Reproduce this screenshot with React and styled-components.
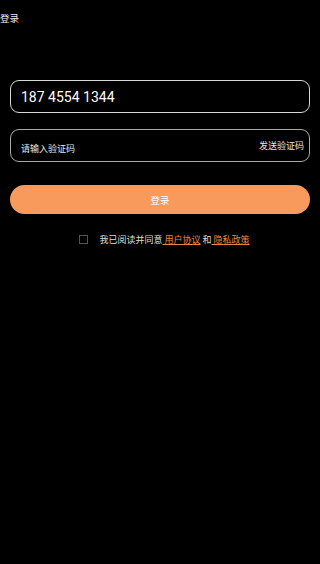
import styled, { createGlobalStyle } from "styled-components";

const GlobalStyle = createGlobalStyle`
  html, body {
    margin: 0;
    padding: 0;
    background: #000;
  }
  body {
    font-family: "Noto Sans CJK SC", Roboto, sans-serif;
  }
`;

const Page = styled.div`
  width: 320px;
  height: 564px;
  background: #000;
  color: #fff;
  box-sizing: border-box;
`;

const Header = styled.div`
  height: 36px;
  padding-top: 11px;
  box-sizing: border-box;
  font-size: 9.5px;
  line-height: 14px;
  color: #eee;
`;

const Form = styled.div`
  padding: 44px 10px 0;
  display: flex;
  flex-direction: column;
`;

const Field = styled.div`
  height: 33px;
  box-sizing: border-box;
  border: ${(p) => (p.active ? "1.5px solid #d8d8d8" : "1px solid #a8a8a8")};
  border-radius: 9px;
  display: flex;
  align-items: center;
  justify-content: space-between;
  padding: 0 5px 0 10px;
  margin-bottom: ${(p) => p.gap}px;
`;

const Value = styled.span`
  font-family: Roboto, "Noto Sans CJK SC", sans-serif;
  font-size: 14px;
  color: #fff;
  padding-top: 1px;
`;

const Placeholder = styled.span`
  font-size: 9px;
  color: #e6e6e6;
  padding-top: 5px;
`;

const SendCode = styled.span`
  font-size: 9px;
  color: #e6e6e6;
  padding-bottom: 1px;
`;

const LoginButton = styled.button`
  height: 29px;
  border: none;
  border-radius: 15px;
  background: #f99a5d;
  color: #fff;
  font-family: "Noto Sans CJK SC", sans-serif;
  font-size: 9.5px;
  padding: 0;
  margin-bottom: 19px;
`;

const Agreement = styled.div`
  display: flex;
  align-items: center;
  justify-content: center;
  font-size: 9px;
  color: #ddd;
  padding-left: 9px;
`;

const Check = styled.span`
  width: 7px;
  height: 7px;
  border: 1px solid #5a514c;
  margin-right: 11px;
`;

const Link = styled.span`
  color: #e8864a;
  text-decoration: underline;
  white-space: pre;
`;

export default function App() {
  return (
    <Page>
      <GlobalStyle />
      <Header>登录</Header>
      <Form>
        <Field active gap={16}>
          <Value>187 4554 1344</Value>
        </Field>
        <Field gap={23}>
          <Placeholder>请输入验证码</Placeholder>
          <SendCode>发送验证码</SendCode>
        </Field>
        <LoginButton>登录</LoginButton>
        <Agreement>
          <Check />
          我已阅读并同意<Link> 用户协议</Link>&nbsp;和<Link> 隐私政策</Link>
        </Agreement>
      </Form>
    </Page>
  );
}
